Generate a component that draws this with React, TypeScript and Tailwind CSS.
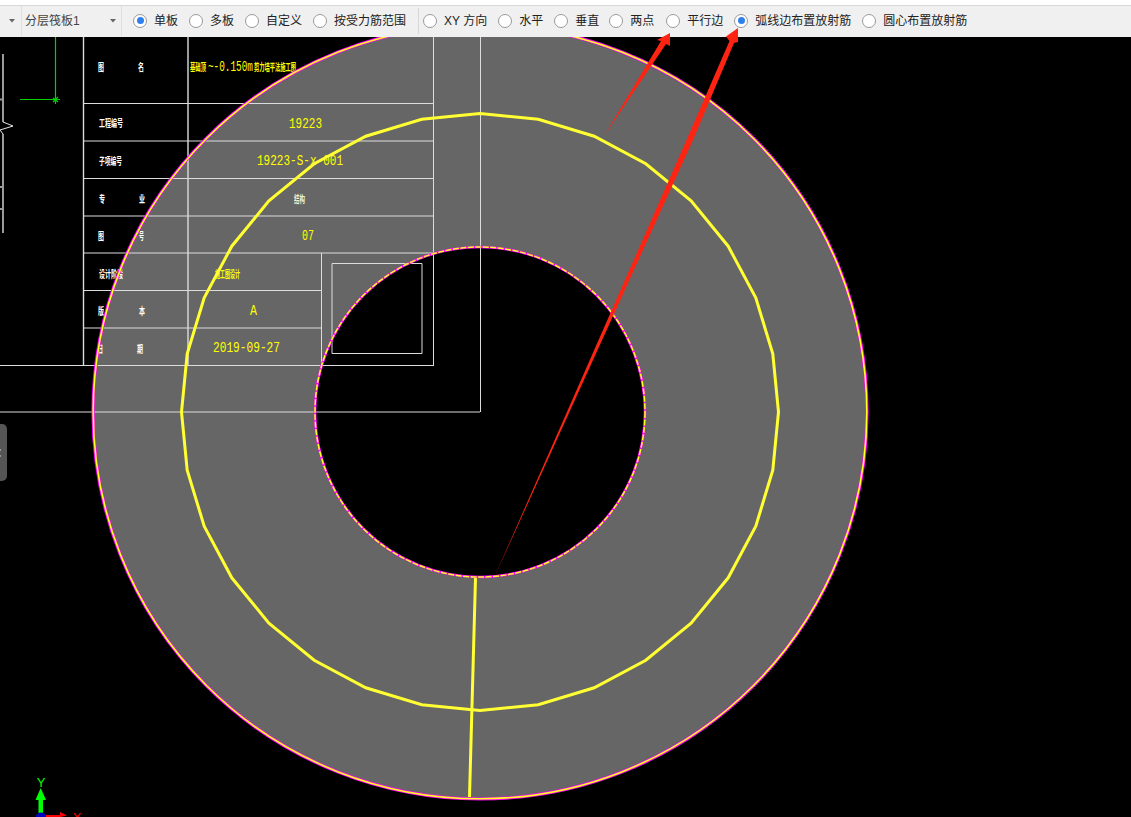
import React from "react";

const cx = 480;
const cy = 412;
const poly = Array.from({ length: 32 }, (_, i) => {
  const a = (i * Math.PI) / 16;
  return `${(cx + 298.5 * Math.sin(a)).toFixed(1)},${(cy - 298.5 * Math.cos(a)).toFixed(1)}`;
}).join(" ");

const ring = `M${cx - 387} ${cy}a387 387 0 1 0 774 0a387 387 0 1 0 -774 0ZM${cx - 165} ${cy}a165 165 0 1 0 330 0a165 165 0 1 0 -330 0Z`;

type Lbl = { t: string; x: number; y: number; w: number; s?: number; c?: string; b?: boolean; m?: boolean };

const labels: Lbl[] = [
  { t: "图", x: 98, y: 67, w: 6, b: true },
  { t: "名", x: 138, y: 67, w: 6, b: true },
  { t: "工程编号", x: 99, y: 123, w: 24, b: true },
  { t: "子项编号", x: 99, y: 161, w: 23, b: true },
  { t: "专", x: 99, y: 199, w: 6, b: true },
  { t: "业", x: 139, y: 199, w: 6, b: true },
  { t: "图", x: 98, y: 236, w: 6, b: true },
  { t: "号", x: 139, y: 236, w: 5, b: true },
  { t: "设计阶段", x: 99, y: 274, w: 24, b: true },
  { t: "版", x: 98, y: 311, w: 6, b: true },
  { t: "本", x: 139, y: 311, w: 6, b: true },
  { t: "日", x: 98, y: 349, w: 5, b: true },
  { t: "期", x: 137, y: 349, w: 6, b: true },
  { t: "结构", x: 294, y: 199, w: 11, c: "#f4f4d0", b: true },
  { t: "基础顶", x: 190, y: 67, w: 16, c: "#ffff00", b: true },
  { t: "~-0.150m", x: 208, y: 67, w: 45, s: 14, c: "#ffff00", m: true },
  { t: "剪力墙平法施工图", x: 254, y: 67, w: 42, c: "#ffff00", b: true },
  { t: "19223", x: 289, y: 124, w: 33, s: 14, c: "#ffff00", m: true },
  { t: "19223-S-x-001", x: 257, y: 161, w: 86, s: 14, c: "#ffff00", m: true },
  { t: "07", x: 302, y: 236, w: 12, s: 14, c: "#ffff00", m: true },
  { t: "施工图设计", x: 215, y: 274, w: 25, c: "#ffff00", b: true },
  { t: "A", x: 250, y: 311, w: 7, s: 14, c: "#ffff00", m: true },
  { t: "2019-09-27", x: 213, y: 348, w: 67, s: 14, c: "#ffff00", m: true },
];

function Caret() {
  return (
    <svg width="6" height="4" viewBox="0 0 6 4" className="shrink-0">
      <path d="M0 0h6L3 3.5z" fill="#666666" />
    </svg>
  );
}

function Radio({ label, on, gap }: { label: string; on?: boolean; gap: string }) {
  return (
    <div className={`flex items-center gap-[7px] ${gap}`}>
      <span className="flex h-[14px] w-[14px] items-center justify-center rounded-full border border-[#9a9a9a] bg-white">
        {on && <span className="h-[7px] w-[7px] rounded-full bg-[#2f80ed]" />}
      </span>
      <span className="whitespace-nowrap text-[12px] leading-none text-[#222222]">{label}</span>
    </div>
  );
}

export default function App() {
  return (
    <div className="relative flex h-[817px] w-full flex-col overflow-hidden bg-black font-['Liberation_Sans','Noto_Sans_CJK_SC',sans-serif]">
      <div className="h-[5px] shrink-0 bg-white" />
      <div className="flex h-[32px] shrink-0 items-center border-t border-[#d8d8d8] bg-[#f0f0f0] pb-[2px]">
        <div className="flex h-[30px] w-[22px] items-center justify-end border-r border-[#e0e0e0] pr-[6px]">
          <Caret />
        </div>
        <div className="flex h-[30px] w-[100px] items-center justify-between border-r border-[#e0e0e0] pl-[3px] pr-[5px]">
          <span className="text-[12px] leading-none text-[#444444]">分层筏板1</span>
          <Caret />
        </div>
        <Radio label="单板" on gap="ml-[11px]" />
        <Radio label="多板" gap="ml-[11px]" />
        <Radio label="自定义" gap="ml-[11px]" />
        <Radio label="按受力筋范围" gap="ml-[11px]" />
        <div className="ml-[12px] h-[26px] w-px bg-[#d8d8d8]" />
        <Radio label="XY 方向" gap="ml-[4px]" />
        <Radio label="水平" gap="ml-[11px]" />
        <Radio label="垂直" gap="ml-[11px]" />
        <Radio label="两点" gap="ml-[10px]" />
        <Radio label="平行边" gap="ml-[12px]" />
        <Radio label="弧线边布置放射筋" on gap="ml-[11px]" />
        <Radio label="圆心布置放射筋" gap="ml-[11px]" />
      </div>

      <svg viewBox="0 37 1131 780" className="block min-h-0 w-full flex-1">
        <path d={ring} fill="#666666" fillRule="evenodd" />

        <g stroke="#dcdcdc" strokeWidth="1" fill="none">
          <path d="M83.5 37V365M188 37V365" strokeWidth="1.4" />
          <path d="M433.5 37V365M321.5 253V365" />
          <path d="M83 103.5H434M83 141H434M83 178.5H434M83 216H434M83 253H434M83 290.5H321M83 328H321" />
          <path d="M0 365.5H434M0 412H480M480.5 37V412" />
          <path d="M332 263.5H422V353.5H332Z" />
          <path d="M3 54V122M3 134V233M0 99.5H3M0 187H3M0 209H3" stroke="#9a9a9a" strokeWidth="2" />
          <path d="M3 122L13 126L0 130L3 134" stroke="#e8e8e8" />
        </g>
        <g stroke="#00d000" strokeWidth="1.2" fill="none">
          <path d="M55.5 37V104M20 99.5H60M53 98L58 102M58 97L53 102" />
        </g>

        {labels.map((l, i) => (
          <text
            key={i}
            x={l.x}
            y={l.y}
            dominantBaseline="central"
            fontSize={l.s ?? 10}
            fontWeight={l.b ? 700 : 400}
            fill={l.c ?? "#ffffff"}
            textLength={l.w}
            lengthAdjust="spacingAndGlyphs"
            className={l.m ? "font-['Liberation_Mono',monospace]" : undefined}
          >
            {l.t}
          </text>
        ))}

        <circle cx={cx} cy={cy} r="387" fill="none" stroke="#ff00ff" strokeWidth="3.2" />
        <circle cx={cx} cy={cy} r="386.8" fill="none" stroke="#ffff20" strokeWidth="1.6" />
        <circle cx={cx} cy={cy} r="165" fill="none" stroke="#ff00ff" strokeWidth="2.6" />
        <circle cx={cx} cy={cy} r="165" fill="none" stroke="#ffff20" strokeWidth="1.5" strokeDasharray="6 1.5" />
        <polygon points={poly} fill="none" stroke="#ffff33" strokeWidth="3" />
        <path d="M475.5 578L469.5 797" stroke="#ffff33" strokeWidth="3" fill="none" />

        <path d="M38.5 813V800H35.5L40.7 788L46 800H43V813Z" fill="#00ff00" />
        <text x="41" y="782" textAnchor="middle" dominantBaseline="central" fontSize="13" fill="#00ff00">Y</text>
        <path d="M46 815H60V812L67 815.5L60 817H46Z" fill="#ff0000" />
        <ellipse cx="41" cy="816" rx="5" ry="3.5" fill="#0000c0" />
        <text x="77" y="822" textAnchor="middle" fontSize="13" fill="#ff0000">X</text>
      </svg>

      <div className="absolute left-0 top-[424px] flex h-[57px] w-[7px] flex-col justify-center gap-[4px] rounded-r-[5px] bg-[#555555]">
        <span className="h-[2px] w-[1px] bg-[#999999]" />
        <span className="h-[2px] w-[1px] bg-[#999999]" />
      </div>

      <svg viewBox="0 0 1131 817" className="pointer-events-none absolute inset-0 h-[817px] w-full">
        <polygon points="670,33 670,46 666,44 604,136 661,41 657,40" fill="#ff2412" />
        <polygon points="738,28 738,42 734,43 693,140 494,578 686.5,140 729.5,41 726,36.5" fill="#ff2412" />
      </svg>
    </div>
  );
}
